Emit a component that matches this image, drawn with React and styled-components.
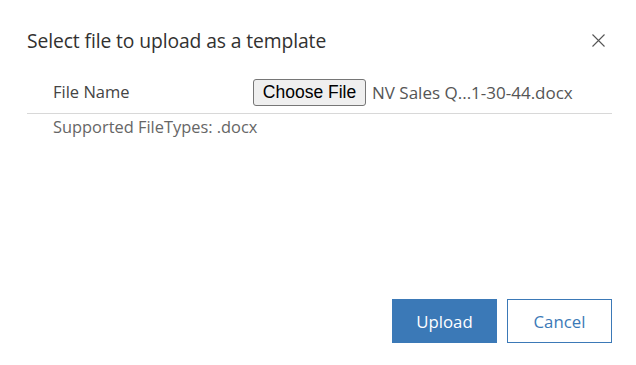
import React from "react";
import styled, { createGlobalStyle } from "styled-components";

const Global = createGlobalStyle`
  html, body { margin: 0; padding: 0; background: #fff; }
  body { font-family: "Open Sans", "Noto Sans", sans-serif; }
  * { box-sizing: border-box; }
`;

const Dialog = styled.div`
  width: 636px;
  height: 365px;
  display: flex;
  flex-direction: column;
  padding: 0 24px 22px 27px;
  background: #fff;
`;

const Header = styled.div`
  display: flex;
  align-items: center;
  justify-content: space-between;
  height: 40px;
  margin-top: 20px;
`;

const Title = styled.h1`
  margin: 0;
  font-size: 19.3px;
  font-weight: 400;
  color: #323130;
  letter-spacing: -0.1px;
`;

const CloseButton = styled.button`
  width: 24px;
  height: 24px;
  padding: 0;
  margin-right: 2px;
  border: none;
  background: none;
  display: flex;
  align-items: center;
  justify-content: center;
  cursor: pointer;
`;

const Body = styled.div`
  flex: 1;
  display: flex;
  flex-direction: column;
`;

const FieldRow = styled.div`
  display: flex;
  align-items: center;
  padding: 19px 0 7px 26px;
  border-bottom: 1px solid #d8d8d8;
`;

const Label = styled.span`
  width: 200px;
  font-size: 16.5px;
  color: #444;
  margin-top: -2px;
`;

const FileControl = styled.div`
  display: flex;
  align-items: center;
  gap: 6px;
`;

const ChooseButton = styled.button`
  height: 27px;
  width: 113px;
  padding: 0;
  font-family: "Liberation Sans", Arial, sans-serif;
  font-size: 17.5px;
  color: #000;
  background: #efefef;
  border: 1px solid #767676;
  border-radius: 3px;
`;

const FileName = styled.span`
  font-size: 17px;
  color: #555;
`;

const Hint = styled.div`
  padding: 1px 0 0 26px;
  font-size: 16.4px;
  color: #666;
`;

const Footer = styled.div`
  display: flex;
  justify-content: flex-end;
  gap: 10px;
`;

const ActionButton = styled.button`
  width: 105px;
  height: 44px;
  font-family: inherit;
  font-size: 16.8px;
  border: 1px solid #3b79b7;
  background: ${(p) => (p.$primary ? "#3b79b7" : "#fff")};
  color: ${(p) => (p.$primary ? "#fff" : "#3b79b7")};
  cursor: pointer;
`;

export default function App() {
  return (
    <>
      <Global />
      <Dialog>
        <Header>
          <Title>Select file to upload as a template</Title>
          <CloseButton aria-label="Close">
            <svg width="13" height="13" viewBox="0 0 13 13">
              <path d="M0.5 0.5 L12.5 12.5 M12.5 0.5 L0.5 12.5" stroke="#555" strokeWidth="1.1" fill="none" />
            </svg>
          </CloseButton>
        </Header>
        <Body>
          <FieldRow>
            <Label>File Name</Label>
            <FileControl>
              <ChooseButton>Choose File</ChooseButton>
              <FileName>NV Sales Q...1-30-44.docx</FileName>
            </FileControl>
          </FieldRow>
          <Hint>Supported FileTypes: .docx</Hint>
        </Body>
        <Footer>
          <ActionButton $primary>Upload</ActionButton>
          <ActionButton>Cancel</ActionButton>
        </Footer>
      </Dialog>
    </>
  );
}
